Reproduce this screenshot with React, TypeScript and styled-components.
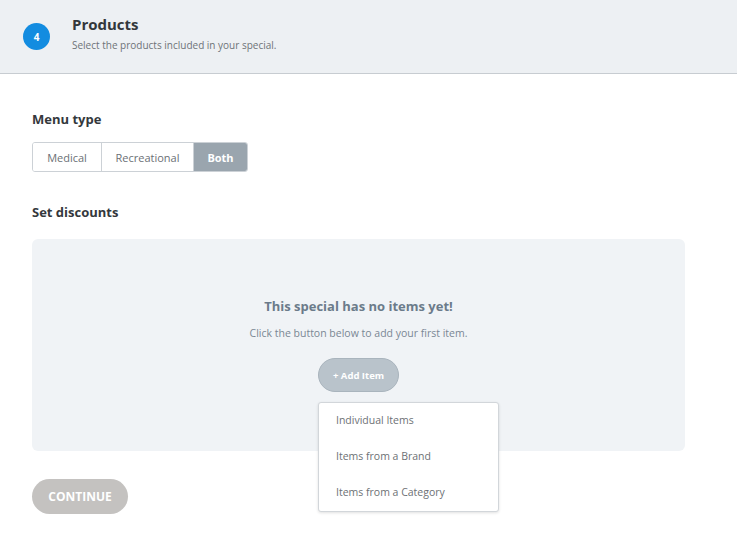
import React from 'react';
import styled, { createGlobalStyle } from 'styled-components';

const GlobalStyle = createGlobalStyle`
  html, body {
    margin: 0;
    padding: 0;
    background: #fff;
    font-family: "Open Sans", Lato, sans-serif;
  }
`;

const Page = styled.div`
  width: 737px;
  height: 547px;
  overflow: hidden;
`;

const Header = styled.header`
  display: flex;
  align-items: flex-start;
  gap: 22px;
  height: 74px;
  box-sizing: border-box;
  padding: 22px 23px 0;
  background: #edf0f3;
  border-bottom: 1px solid #c7ccd1;
`;

const StepCircle = styled.div`
  width: 27px;
  height: 27px;
  margin-top: 1px;
  border-radius: 50%;
  background: #138ce0;
  color: #fff;
  font-size: 10px;
  font-weight: 700;
  display: flex;
  align-items: center;
  justify-content: center;
`;

const HeaderText = styled.div`
  display: flex;
  flex-direction: column;
`;

const Title = styled.h1`
  margin: -9px 0 0;
  font-size: 15px;
  font-weight: 700;
  color: #33373b;
  line-height: 22px;
`;

const Subtitle = styled.p`
  margin: 3px 0 0;
  font-size: 10px;
  color: #6e7378;
`;

const Content = styled.main`
  padding: 36px 52px 0 32px;
`;

const Label = styled.h2<{ $gap: number }>`
  margin: 0 0 ${({ $gap }) => $gap}px;
  font-size: 13px;
  font-weight: 700;
  color: #34383c;
  line-height: 18px;
`;

const Segmented = styled.div`
  display: inline-flex;
  height: 28px;
  border: 1px solid #ccd1d6;
  border-radius: 3px;
  overflow: hidden;
  margin-bottom: 31px;
`;

const Segment = styled.button<{ $active?: boolean; $w: number }>`
  width: ${({ $w }) => $w}px;
  border: none;
  border-left: 1px solid #ccd1d6;
  &:first-child { border-left: none; }
  background: ${({ $active }) => ($active ? '#9aa5ae' : '#fff')};
  color: ${({ $active }) => ($active ? '#fff' : '#6b7075')};
  font-family: inherit;
  font-size: 11px;
  font-weight: ${({ $active }) => ($active ? 700 : 400)};
  padding: 0;
  cursor: pointer;
`;

const EmptyPanel = styled.section`
  height: 212px;
  border-radius: 6px;
  background: #f0f3f6;
  display: flex;
  flex-direction: column;
  align-items: center;
  padding-top: 58px;
  box-sizing: border-box;
`;

const EmptyTitle = styled.div`
  font-size: 13px;
  font-weight: 700;
  color: #6b7b8a;
  line-height: 18px;
`;

const EmptyText = styled.div`
  margin-top: 11px;
  font-size: 10.5px;
  color: #7a8794;
`;

const AddWrap = styled.div`
  position: relative;
  margin-top: 18px;
`;

const AddButton = styled.button`
  width: 81px;
  height: 34px;
  border-radius: 17px;
  border: 1px solid #a9b4bd;
  background: #b9c3cb;
  color: #fff;
  font-family: inherit;
  font-size: 9.5px;
  font-weight: 700;
  cursor: pointer;
`;

const Menu = styled.ul`
  position: absolute;
  top: 44px;
  left: 0;
  width: 179px;
  margin: 0;
  padding: 0;
  list-style: none;
  background: #fff;
  border: 1px solid #d2d6da;
  border-radius: 3px;
  box-shadow: 0 1px 3px rgba(0, 0, 0, 0.12);
  z-index: 2;
`;

const MenuItem = styled.li`
  height: 36px;
  line-height: 34px;
  padding-left: 17px;
  font-size: 10.5px;
  color: #6d7175;
`;

const ContinueButton = styled.button`
  margin-top: 28px;
  width: 96px;
  height: 35px;
  border-radius: 18px;
  border: none;
  background: #c4c2c0;
  color: #fff;
  font-family: inherit;
  font-size: 12px;
  font-weight: 700;
`;

export default function App() {
  return (
    <Page>
      <GlobalStyle />
      <Header>
        <StepCircle>4</StepCircle>
        <HeaderText>
          <Title>Products</Title>
          <Subtitle>Select the products included in your special.</Subtitle>
        </HeaderText>
      </Header>
      <Content>
        <Label $gap={14}>Menu type</Label>
        <Segmented>
          <Segment $w={68}>Medical</Segment>
          <Segment $w={92}>Recreational</Segment>
          <Segment $w={54} $active>Both</Segment>
        </Segmented>
        <Label $gap={18}>Set discounts</Label>
        <EmptyPanel>
          <EmptyTitle>This special has no items yet!</EmptyTitle>
          <EmptyText>Click the button below to add your first item.</EmptyText>
          <AddWrap>
            <AddButton>+ Add Item</AddButton>
            <Menu>
              <MenuItem>Individual Items</MenuItem>
              <MenuItem>Items from a Brand</MenuItem>
              <MenuItem>Items from a Category</MenuItem>
            </Menu>
          </AddWrap>
        </EmptyPanel>
        <ContinueButton>CONTINUE</ContinueButton>
      </Content>
    </Page>
  );
}
